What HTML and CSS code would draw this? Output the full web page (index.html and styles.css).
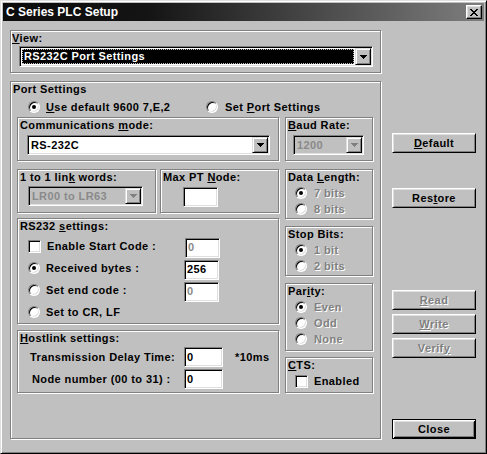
FILE: index.html
```html
<!DOCTYPE html>
<html>
<head>
<meta charset="utf-8">
<title>C Series PLC Setup</title>
<link rel="stylesheet" href="styles.css">
</head>
<body>
<div class="win">
  <div class="titlebar">
    <span class="title">C Series PLC Setup</span>
    <span class="tbtn"><svg width="8" height="7" viewBox="0 0 8 7" shape-rendering="crispEdges"><path d="M0 0h2v1H0zM6 0h2v1H6zM1 1h2v1H1zM5 1h2v1H5zM2 2h4v1H2zM3 3h2v1H3zM2 4h4v1H2zM1 5h2v1H1zM5 5h2v1H5zM0 6h2v1H0zM6 6h2v1H6z" fill="#000"/></svg></span>
  </div>
  <div class="client">
    <div class="leftcol">
      <div class="grp view">
        <div class="glabel"><u>V</u>iew:</div>
        <div class="combo combo-view">
          <div class="field"><span class="sel">RS232C Port Settings</span></div>
          <div class="drop"><svg width="7" height="4" viewBox="0 0 7 4" shape-rendering="crispEdges"><path d="M0 0h7v1H0zM1 1h5v1H1zM2 2h3v1H2zM3 3h1v1H3z" fill="#000"/></svg></div>
        </div>
      </div>
      <div class="grp port">
        <div class="glabel">Port Settings</div>
        <div class="toprow">
          <div class="opt opt-first"><span class="radio on"></span><span><u>U</u>se default 9600 7,E,2</span></div>
          <div class="opt opt-second"><span class="radio"></span><span>Set <u>P</u>ort Settings</span></div>
        </div>
        <div class="cols">
          <div class="lcol">
            <div class="grp comm">
              <div class="glabel">Communications <u>m</u>ode:</div>
              <div class="combo combo-comm">
                <div class="field"><span class="ftext">RS-232C</span></div>
                <div class="drop"><svg width="7" height="4" viewBox="0 0 7 4" shape-rendering="crispEdges"><path d="M0 0h7v1H0zM1 1h5v1H1zM2 2h3v1H2zM3 3h1v1H3z" fill="#000"/></svg></div>
              </div>
            </div>
            <div class="linkrow">
              <div class="grp link">
                <div class="glabel">1 to 1 lin<u>k</u> words:</div>
                <div class="combo combo-link disabled">
                  <div class="field"><span class="ftext">LR00 to LR63</span></div>
                  <div class="drop"><svg width="7" height="4" viewBox="0 0 7 4" shape-rendering="crispEdges"><path d="M0 0h7v1H0zM1 1h5v1H1zM2 2h3v1H2zM3 3h1v1H3z" fill="#808080"/></svg></div>
                </div>
              </div>
              <div class="grp maxpt">
                <div class="glabel">Max PT <u>N</u>ode:</div>
                <div class="edit edit-maxpt"></div>
              </div>
            </div>
            <div class="grp rs232">
              <div class="glabel">RS232 <u>s</u>ettings:</div>
              <div class="rows">
                <div class="crow"><span class="check"></span><span class="rlabel">Enable Start Code :</span><span class="edit edit-small dis">0</span></div>
                <div class="crow"><span class="radio on"></span><span class="rlabel">Received bytes :</span><span class="edit edit-small">256</span></div>
                <div class="crow"><span class="radio"></span><span class="rlabel">Set end code :</span><span class="edit edit-small dis">0</span></div>
                <div class="crow"><span class="radio"></span><span class="rlabel">Set to CR, LF</span></div>
              </div>
            </div>
            <div class="grp host">
              <div class="glabel"><u>H</u>ostlink settings:</div>
              <div class="hrow hrow-1"><span class="hlabel">Transmission Delay Time:</span><span class="edit edit-host">0</span><span class="unit">*10ms</span></div>
              <div class="hrow hrow-2"><span class="hlabel">Node number (00 to 31) :</span><span class="edit edit-host">0</span></div>
            </div>
          </div>
          <div class="rcol">
            <div class="grp baud">
              <div class="glabel"><u>B</u>aud Rate:</div>
              <div class="combo combo-baud disabled">
                <div class="field"><span class="ftext">1200</span></div>
                <div class="drop"><svg width="7" height="4" viewBox="0 0 7 4" shape-rendering="crispEdges"><path d="M0 0h7v1H0zM1 1h5v1H1zM2 2h3v1H2zM3 3h1v1H3z" fill="#808080"/></svg></div>
              </div>
            </div>
            <div class="grp small datalen">
              <div class="glabel">Data <u>L</u>ength:</div>
              <div class="srows">
                <div class="srow"><span class="radio on"></span><span class="dtext">7 bits</span></div>
                <div class="srow"><span class="radio"></span><span class="dtext">8 bits</span></div>
              </div>
            </div>
            <div class="grp small stop">
              <div class="glabel">Stop Bits:</div>
              <div class="srows">
                <div class="srow"><span class="radio on"></span><span class="dtext">1 bit</span></div>
                <div class="srow"><span class="radio"></span><span class="dtext">2 bits</span></div>
              </div>
            </div>
            <div class="grp small parity">
              <div class="glabel">Par<u>i</u>ty:</div>
              <div class="srows">
                <div class="srow"><span class="radio on"></span><span class="dtext">Even</span></div>
                <div class="srow"><span class="radio"></span><span class="dtext">Odd</span></div>
                <div class="srow"><span class="radio"></span><span class="dtext">None</span></div>
              </div>
            </div>
            <div class="grp small cts">
              <div class="glabel"><u>C</u>TS:</div>
              <div class="srows">
                <div class="srow srow-check"><span class="check"></span><span>Enabled</span></div>
              </div>
            </div>
          </div>
        </div>
      </div>
    </div>
    <div class="btncol">
      <div class="btn btn-default"><u>D</u>efault</div>
      <div class="btn btn-restore">Res<u>t</u>ore</div>
      <div class="btn btn-read btn-dis"><u>R</u>ead</div>
      <div class="btn btn-write btn-dis"><u>W</u>rite</div>
      <div class="btn btn-verify btn-dis">Verif<u>y</u></div>
      <div class="btn btn-close">Close</div>
    </div>
  </div>
</div>
</body>
</html>
```
FILE: styles.css
```css
* { box-sizing: border-box; }
html, body { margin: 0; padding: 0; }
body {
  width: 487px;
  height: 454px;
  overflow: hidden;
  background: #c0c0c0;
  color: #000;
  font-family: "Liberation Sans", Arial, sans-serif;
  font-weight: bold;
  font-size: 11px;
  line-height: 13px;
  letter-spacing: 0.4px;
}
u { text-decoration: underline; text-underline-offset: 1px; }

.win {
  width: 487px;
  height: 454px;
  padding: 2px;
  background: #c0c0c0;
  border: 1px solid;
  border-color: #dfdfdf #000 #000 #dfdfdf;
  box-shadow: inset 1px 1px #fff, inset -1px -1px #808080;
}

.titlebar {
  height: 18px;
  display: flex;
  align-items: center;
  justify-content: space-between;
  padding: 0 2px 0 3px;
  background: linear-gradient(90deg, #0c0c0c 0%, #141414 30%, #7e7e7e 100%);
}
.title { color: #fff; font-size: 12px; letter-spacing: 0; }
.tbtn {
  width: 16px;
  height: 14px;
  display: flex;
  align-items: center;
  justify-content: center;
  background: #c0c0c0;
  border: 1px solid;
  border-color: #fff #000 #000 #fff;
  box-shadow: inset -1px -1px #808080, inset 1px 1px #dfdfdf;
}
.tbtn svg { display: block; }

.client {
  display: flex;
  padding: 9px 0 0 7px;
}
.leftcol { width: 371px; }

/* group boxes */
.grp {
  border: 1px solid #808080;
  box-shadow: inset 1px 1px #fff, 1px 1px #fff;
  padding: 1px 0 0 2px;
}
.glabel { height: 13px; white-space: nowrap; }

.view { height: 43px; padding-left: 1px; }
.port { margin-top: 8px; height: 358px; }

/* combos */
.combo {
  display: flex;
  padding: 1px;
  background: #fff;
  border: 1px solid;
  border-color: #808080 #fff #fff #808080;
  box-shadow: inset 1px 1px #000, inset -1px -1px #dfdfdf;
}
.combo.disabled { background: #c0c0c0; color: #8a8a8a; }
.field {
  flex: 1;
  display: flex;
  align-items: center;
  min-width: 0;
}
.ftext { padding-left: 2px; white-space: nowrap; }
.sel {
  flex: 1;
  align-self: stretch;
  margin: 1px;
  padding-left: 2px;
  display: flex;
  align-items: center;
  background: #000;
  color: #fff;
  outline: 1px dotted #c0c0c0;
  outline-offset: -1px;
}
.drop {
  width: 16px;
  display: flex;
  align-items: center;
  justify-content: center;
  background: #c0c0c0;
  border: 1px solid;
  border-color: #dfdfdf #000 #000 #dfdfdf;
  box-shadow: inset 1px 1px #fff, inset -1px -1px #808080;
}
.drop svg { display: block; }

.combo-view { margin: 1px 0 0 7px; width: 354px; height: 21px; }
.combo-comm { margin: 3px 0 0 7px; width: 243px; height: 20px; }
.combo-link { margin: 2px 0 0 8px; width: 115px; height: 20px; }
.combo-baud { margin: 3px 0 0 5px; width: 71px; height: 20px; }

/* radios and checks */
.radio {
  position: relative;
  flex: none;
  width: 12px;
  height: 12px;
  border-radius: 50%;
  background: #fff;
  border: 1px solid;
  border-color: #808080 #fff #fff #808080;
  box-shadow: inset 1px 1px #000, inset -1px -1px #dfdfdf;
}
.radio.on::after {
  content: "";
  position: absolute;
  left: 3px;
  top: 3px;
  width: 4px;
  height: 4px;
  border-radius: 50%;
  background: #000;
}
.check {
  flex: none;
  width: 13px;
  height: 13px;
  background: #fff;
  border: 1px solid;
  border-color: #808080 #fff #fff #808080;
  box-shadow: inset 1px 1px #000, inset -1px -1px #dfdfdf;
}

/* top radio row */
.toprow {
  display: flex;
  height: 16px;
  margin-top: 3px;
  padding-left: 15px;
  align-items: center;
}
.opt { display: flex; align-items: center; white-space: nowrap; }
.opt-first { width: 178px; gap: 6px; }
.opt-second { gap: 7px; }

.cols {
  display: flex;
  gap: 6px;
  margin: 2px 0 0 4px;
}
.lcol { width: 262px; display: flex; flex-direction: column; }
.rcol { width: 88px; display: flex; flex-direction: column; }

.comm { height: 44px; }
.linkrow { display: flex; gap: 4px; margin-top: 8px; }
.link { width: 139px; height: 44px; }
.maxpt { width: 119px; height: 44px; }

/* edits */
.edit {
  display: flex;
  align-items: center;
  padding-left: 2px;
  background: #fff;
  border: 1px solid;
  border-color: #808080 #fff #fff #808080;
  box-shadow: inset 1px 1px #000, inset -1px -1px #dfdfdf;
  white-space: nowrap;
}
.edit.dis { color: #8a8a8a; }
.edit-maxpt { margin: 3px 0 0 20px; width: 35px; height: 20px; }
.edit-small { width: 35px; height: 20px; margin-top: 3px; flex: none; }
.edit-host { width: 39px; height: 20px; flex: none; }

.rs232 { margin-top: 5px; height: 106px; }
.rows { margin-top: 2px; }
.crow {
  display: flex;
  align-items: center;
  height: 22px;
  padding-left: 8px;
  gap: 6px;
}
.rlabel { width: 132px; white-space: nowrap; }

.host { margin-top: 6px; height: 63px; }
.hrow { display: flex; align-items: center; height: 22px; white-space: nowrap; }
.hrow-1 { margin-top: 1px; padding-left: 10px; }
.hrow-2 { padding-left: 12px; }
.hrow-1 .hlabel { width: 154px; }
.hrow-2 .hlabel { width: 152px; }
.unit { margin-left: 12px; }

/* right sub column */
.baud { height: 44px; }
.datalen { margin-top: 8px; height: 50px; }
.stop { margin-top: 7px; height: 50px; }
.parity { margin-top: 7px; height: 68px; }
.cts { margin-top: 6px; height: 36px; }
.srows { margin-top: 1px; }
.srow {
  display: flex;
  align-items: center;
  height: 16px;
  padding-left: 7px;
  gap: 7px;
  white-space: nowrap;
}
.srow-check { gap: 6px; }
.dtext { color: #808080; text-shadow: 1px 1px #fff; }

/* buttons */
.btncol {
  width: 84px;
  margin-left: 11px;
  padding-top: 103px;
  display: flex;
  flex-direction: column;
}
.btn {
  height: 20px;
  display: flex;
  align-items: center;
  justify-content: center;
  background: #c0c0c0;
  border: 1px solid;
  border-color: #fff #000 #000 #fff;
  box-shadow: inset 1px 1px #dfdfdf, inset -1px -1px #808080;
  white-space: nowrap;
}
.btn-dis { color: #808080; text-shadow: 1px 1px #fff; }
.btn-restore { margin-top: 35px; }
.btn-read { margin-top: 82px; }
.btn-write { margin-top: 4px; }
.btn-verify { margin-top: 4px; }
.btn-close {
  margin-top: 61px;
  border-color: #000;
  box-shadow: inset 1px 1px #fff, inset -1px -1px #000, inset 2px 2px #dfdfdf, inset -2px -2px #808080;
}
```
